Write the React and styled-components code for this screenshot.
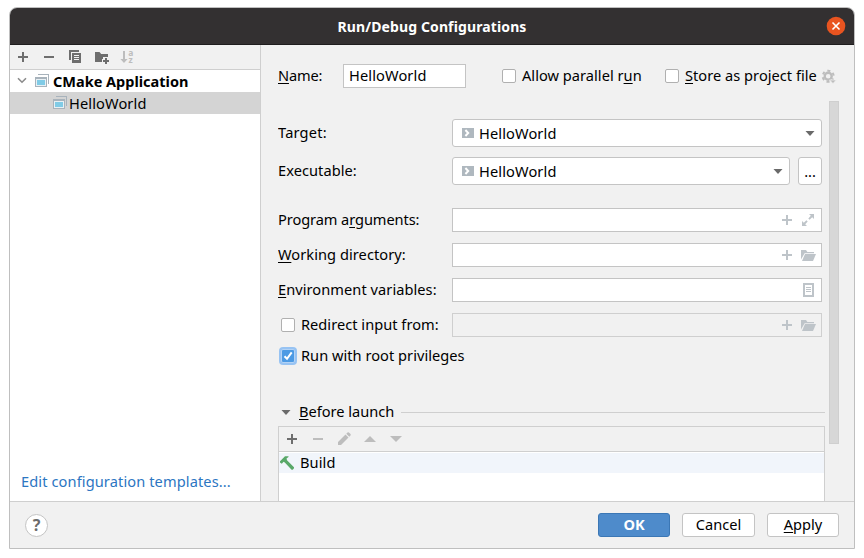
import React from "react";
import styled, { createGlobalStyle, css } from "styled-components";

const GlobalStyle = createGlobalStyle`
  * { box-sizing: border-box; }
  body { margin: 0; background: #fff; }
`;

const Window = styled.div`
  width: 846px;
  height: 542px;
  margin: 7px 0 0 9px;
  border: 1px solid #bfbfbf;
  border-radius: 8px 8px 0 0;
  background: #f1f1f1;
  overflow: hidden;
  display: flex;
  flex-direction: column;
  color: #000;
  font: 14.6px/22px "Noto Sans", sans-serif;
  white-space: nowrap;
`;

const TitleBar = styled.header`
  height: 37px;
  flex: none;
  display: grid;
  grid-template-columns: 28px 1fr 28px;
  align-items: center;
  background: #333031;
  border-bottom: 1px solid #1f1d1e;
  color: #fff;
`;

const Title = styled.h1`
  grid-column: 2;
  margin: 0;
  padding-top: 2px;
  text-align: center;
  font-size: 14px;
  line-height: 22px;
  font-weight: 700;
  letter-spacing: 0.12px;
`;

const CloseButton = styled.button`
  width: 20px;
  height: 20px;
  padding: 0;
  border: 0;
  background: none;
`;

const Body = styled.main`
  height: 457px;
  flex: none;
  display: flex;
  border-bottom: 1px solid #cfcfcf;
`;

const Sidebar = styled.aside`
  width: 251px;
  flex: none;
  display: flex;
  flex-direction: column;
  background: #fff;
  border-right: 1px solid #cfcfcf;
`;

const Toolbar = styled.div`
  height: 25px;
  flex: none;
  display: flex;
  align-items: center;
  gap: 10px;
  padding-left: 5px;
  background: #f1f1f1;
  border-bottom: 1px solid #cfcfcf;
`;

const TreeRow = styled.div`
  height: 22px;
  display: flex;
  align-items: center;
  padding-left: ${(p) => (p.$child ? 43 : 7)}px;
  background: ${(p) => (p.$selected ? "#d4d4d4" : "#fff")};
  letter-spacing: ${(p) => (p.$child ? 0.12 : 0)}px;
  ${(p) => p.$bold && css`font-weight: 700; font-size: 14.5px;`}
`;

const TreeLabel = styled.span`
  padding-left: ${(p) => p.$pad}px;
`;

const TemplatesLink = styled.a`
  margin: auto 0 9px 11px;
  color: #2c76c2;
  letter-spacing: 0.11px;
`;

const Glyph = styled.svg`
  display: block;
  flex: none;
  overflow: visible;
`;

const Editor = styled.section`
  flex: 1;
  min-width: 0;
  padding: 19px 15px 0 17px;
  display: flex;
  flex-direction: column;
`;

const NameRow = styled.div`
  height: 24px;
  flex: none;
  display: flex;
  align-items: center;
`;

const NameLabel = styled.label`
  width: 65px;
  padding-bottom: 2px;
  letter-spacing: -0.15px;
`;

const NameInput = styled.div`
  width: 123px;
  height: 24px;
  padding-left: 5px;
  border: 1px solid #c4c4c4;
  background: #fff;
  line-height: 20px;
  letter-spacing: 0.12px;
  margin-right: 36px;
`;

const CheckLabel = styled.label`
  display: flex;
  align-items: center;
  gap: 6px;
  width: ${(p) => p.$width || "auto"};
  letter-spacing: 0.03px;
`;

const CheckText = styled.span`
  padding-bottom: 2px;
`;

const Box = styled.span`
  width: 14px;
  height: 14px;
  flex: none;
  border: 1px solid #b0b0b0;
  border-radius: 2px;
  background: #fff;
  ${(p) =>
    p.$checked &&
    css`
      border-color: #b4d3f5;
      background: #4c9ae4;
      box-shadow: 0 0 0 2px #97c3f3;
    `}
`;

const Key = styled.u`
  text-decoration: underline;
  text-decoration-thickness: 1px;
  text-underline-offset: 2px;
  text-decoration-skip-ink: none;
`;

const ScrollArea = styled.div`
  flex: 1;
  min-height: 0;
  margin-top: 13px;
  display: flex;
  justify-content: space-between;
`;

const Form = styled.div`
  width: 547px;
  padding-top: 18px;
  overflow: hidden;
`;

const ScrollThumb = styled.div`
  width: 10px;
  height: 343px;
  background: #d7d7d7;
  border: 1px solid #cfcfcf;
`;

const FormRow = styled.div`
  height: ${(p) => p.$h}px;
  margin-bottom: ${(p) => p.$gap}px;
  width: 544px;
  display: grid;
  grid-template-columns: 174px 1fr;
  align-items: center;
`;

const FormLabel = styled.span`
  padding-bottom: 2px;
  letter-spacing: ${(p) => p.$track || "0.06px"};
`;

const Inset = styled.div`
  padding-left: 3px;
`;

const Inline = styled.div`
  display: flex;
  gap: 8px;
`;

const Combo = styled.div`
  flex: 1;
  height: 28px;
  display: flex;
  align-items: center;
  padding: 0 3px 0 7px;
  border: 1px solid #c4c4c4;
  border-radius: 3px;
  background: #fff;
`;

const ComboText = styled.span`
  flex: 1;
  padding: 0 0 1px 3px;
  letter-spacing: 0.12px;
`;

const MoreButton = styled.button`
  width: 24px;
  height: 28px;
  padding: 0;
  border: 1px solid #c4c4c4;
  border-radius: 3px;
  background: #fff;
  color: #000;
  font: inherit;
`;

const Field = styled.div`
  height: 24px;
  display: flex;
  align-items: center;
  justify-content: flex-end;
  gap: 6px;
  padding-right: 4px;
  border: 1px solid ${(p) => (p.$disabled ? "#cfcfcf" : "#c4c4c4")};
  background: ${(p) => (p.$disabled ? "#f1f1f1" : "#fff")};
`;

const RootRow = styled.div`
  height: 24px;
  margin: 7px 0 32px;
  padding-left: 3px;
  display: flex;
  align-items: center;
`;

const SectionHead = styled.div`
  height: 24px;
  display: flex;
  align-items: center;

  &::after {
    content: "";
    flex: 1;
    height: 1px;
    margin-left: 7px;
    background: #cfcfcf;
  }
`;

const SectionTitle = styled.span`
  width: 95px;
  margin-left: 5px;
  padding-bottom: 2px;
`;

const TaskPanel = styled.div`
  height: 90px;
  margin-top: 2px;
  background: #fff;
  border: 1px solid #cfcfcf;
`;

const TaskRow = styled.div`
  height: 20px;
  margin-top: 1px;
  display: flex;
  align-items: center;
  gap: 5px;
  background: #f1f5fb;
`;

const TaskName = styled.span`
  padding-bottom: 2px;
  letter-spacing: 0.1px;
`;

const Footer = styled.footer`
  height: 46px;
  display: flex;
  align-items: center;
  padding: 0 15px 0 15px;
  gap: 12px;
`;

const HelpButton = styled.button`
  width: 23px;
  height: 23px;
  padding: 0;
  margin-right: auto;
  border: 1px solid #c4c4c4;
  border-radius: 50%;
  background: #fff;
  color: #6b6b6b;
  font: 700 16px/21px "Noto Sans", sans-serif;
`;

const Button = styled.button`
  width: ${(p) => p.$w || 72}px;
  height: 24px;
  padding: 0 0 2px;
  border: 1px solid ${(p) => (p.$primary ? "#3b77b5" : "#c4c4c4")};
  border-radius: 3px;
  background: ${(p) => (p.$primary ? "#4e8bcb" : "#fff")};
  color: ${(p) => (p.$primary ? "#fff" : "#000")};
  font: inherit;
  line-height: 20px;
  font-weight: ${(p) => (p.$primary ? 700 : 400)};
`;

const Icon = ({ children, w = 16, h = 16, color = "#6e6e6e", crisp }) => (
  <Glyph
    width={w}
    height={h}
    viewBox={`0 0 ${w} ${h}`}
    fill={color}
    shapeRendering={crisp ? "crispEdges" : "auto"}
  >
    {children}
  </Glyph>
);

const Plus = ({ color }) => (
  <Icon color={color} crisp><path d="M7 3h2v4h4v2H9v4H7V9H3V7h4z" /></Icon>
);
const Minus = ({ color }) => (
  <Icon color={color} crisp><path d="M3 7h10v2H3z" /></Icon>
);
const Copy = () => (
  <Icon crisp>
    <path d="M2 1h10v2H4v8H2z" />
    <path d="M5 4h9v10H5z" />
    <path d="M7 6h5v1H7zM7 8h5v1H7zM7 10h5v1H7z" fill="#f1f1f1" />
  </Icon>
);
const NewFolder = () => (
  <Icon>
    <path d="M2 3h4.5l1.7 2H15v3h-5v2H9v3H2z" />
    <path d="M12 9h2v2h2v2h-2v2h-2v-2h-2v-2h2z" />
  </Icon>
);
const SortAz = () => (
  <Icon color="#bdbdbd">
    <path d="M4 2h2v8h2.6L5 14 1.4 10H4z" />
    <text x="9.2" y="7" fontSize="8.5" fontWeight="700" fontFamily="Noto Sans, sans-serif">a</text>
    <text x="9.4" y="14" fontSize="8.5" fontWeight="700" fontFamily="Noto Sans, sans-serif">z</text>
  </Icon>
);
const Chevron = () => (
  <Icon w={10} h={8}>
    <path d="M1 1.2 5 5.2 9 1.2" fill="none" stroke="#8c8c8c" strokeWidth="1.6" />
  </Icon>
);
const AppIcon = () => (
  <Icon w={14} h={14} color="#a8b3bc" crisp>
    <path d="M3 0h11v10h-1V1H3z" />
    <path d="M0 3h12v10H0z" />
    <path d="M1 5h10v7H1z" fill="#e8f0f4" />
    <path d="M2 6h8v5H2z" fill="#80cbe6" />
  </Icon>
);
const Target = () => (
  <Icon color="#afb8bf">
    <path d="M2 3h12v10H2z" />
    <path d="M5.4 5 8.2 8 5.4 11" fill="none" stroke="#fff" strokeWidth="2" />
  </Icon>
);
const Caret = ({ color = "#6a6a6a", up, wide }) => (
  <Icon color={color}>
    <path d={up ? "M2 11h12L8 5z" : wide ? "M2 5h12L8 11z" : "M3.5 6h9L8 11z"} />
  </Icon>
);
const pale = "#bec4c9";
const Expand = () => (
  <Icon color={pale}>
    <path d="M8 2h5v5l-1.8-1.8-2.6 2.5-1.3-1.3L9.8 3.8zM1 9l1.8 1.8 2.6-2.5 1.3 1.3-2.5 2.6L6 14H1z" />
  </Icon>
);
const OpenFolder = () => (
  <Icon color={pale}>
    <path d="M0 3h5l1.4 2H13v1.3H3.6L0 12.5z" />
    <path d="M4 7h11l-3 7H1z" />
  </Icon>
);
const Doc = () => (
  <Icon color={pale} crisp>
    <path d="M2 1h11v14H2zM4 3v10h7V3z" fillRule="evenodd" />
    <path d="M5 5h5v1H5zM5 7h5v1H5zM5 9h5v1H5z" />
  </Icon>
);
const Pencil = () => (
  <Icon color="#bdbdbd">
    <path d="M2 11 9.5 3.5l3 3L5 14H2zM10.3 2.7l1.2-1.2q.7-.6 1.4 0l1.6 1.6q.6.7 0 1.4l-1.2 1.2z" />
  </Icon>
);
const Hammer = () => (
  <Icon color="#59a869">
    <path d="M1 7.6 1 6.2 6 1.3 9.5 1.2 9.5 2 7.5 3.6 8 5.2 15 12.3 15 13.3 13.7 14.8 12.6 14.8 5.8 7.5 4.6 6.8 2.8 8.8z" />
  </Icon>
);
const Gear = () => (
  <Icon color="#bdbdbd">
    <g fill="none" stroke="#bdbdbd">
      <circle cx="7.2" cy="8.2" r="3.5" strokeWidth="2.4" />
      <circle cx="7.2" cy="8.2" r="5.5" strokeWidth="2" strokeDasharray="2.9 2.86" strokeDashoffset="1.45" transform="rotate(30 7.2 8.2)" />
    </g>
    <path d="M8.5 12h6.8L12 15.6z" stroke="#f1f1f1" strokeWidth=".8" />
  </Icon>
);

export default function App() {
  return (
    <>
      <GlobalStyle />
      <Window>
        <TitleBar>
          <Title>Run/Debug Configurations</Title>
          <CloseButton aria-label="Close">
            <Icon w={20} h={20}>
              <circle cx="10" cy="10" r="9.3" fill="#e95420" />
              <path d="M6.5 6.5l7 7M13.5 6.5l-7 7" stroke="#fff" strokeWidth="1.6" />
            </Icon>
          </CloseButton>
        </TitleBar>
        <Body>
          <Sidebar>
            <Toolbar>
              <Plus /><Minus /><Copy /><NewFolder /><SortAz />
            </Toolbar>
            <TreeRow $bold>
              <Chevron />
              <TreeLabel $pad={8}><AppIcon /></TreeLabel>
              <TreeLabel $pad={4}>CMake Application</TreeLabel>
            </TreeRow>
            <TreeRow $child $selected>
              <AppIcon />
              <TreeLabel $pad={2}>HelloWorld</TreeLabel>
            </TreeRow>
            <TemplatesLink>Edit configuration templates...</TemplatesLink>
          </Sidebar>
          <Editor>
            <NameRow>
              <NameLabel><Key>N</Key>ame:</NameLabel>
              <NameInput>HelloWorld</NameInput>
              <CheckLabel $width="163px">
                <Box /><CheckText>Allow parallel r<Key>u</Key>n</CheckText>
              </CheckLabel>
              <CheckLabel $width="156px">
                <Box /><CheckText><Key>S</Key>tore as project file</CheckText>
              </CheckLabel>
              <Gear />
            </NameRow>
            <ScrollArea>
              <Form>
                <FormRow $h={28} $gap={10}>
                  <FormLabel $track="0.2px">Target:</FormLabel>
                  <Combo><Target /><ComboText>HelloWorld</ComboText><Caret /></Combo>
                </FormRow>
                <FormRow $h={28} $gap={23}>
                  <FormLabel>Executable:</FormLabel>
                  <Inline>
                    <Combo><Target /><ComboText>HelloWorld</ComboText><Caret /></Combo>
                    <MoreButton>...</MoreButton>
                  </Inline>
                </FormRow>
                <FormRow $h={24} $gap={11}>
                  <FormLabel $track="-0.08px">Program a<Key>r</Key>guments:</FormLabel>
                  <Field><Plus color={pale} /><Expand /></Field>
                </FormRow>
                <FormRow $h={24} $gap={11}>
                  <FormLabel><Key>W</Key>orking directory:</FormLabel>
                  <Field><Plus color={pale} /><OpenFolder /></Field>
                </FormRow>
                <FormRow $h={24} $gap={11}>
                  <FormLabel><Key>E</Key>nvironment variables:</FormLabel>
                  <Field><Doc /></Field>
                </FormRow>
                <FormRow $h={24} $gap={0}>
                  <Inset>
                    <CheckLabel><Box /><CheckText>Redirect input from:</CheckText></CheckLabel>
                  </Inset>
                  <Field $disabled><Plus color={pale} /><OpenFolder /></Field>
                </FormRow>
                <RootRow>
                  <CheckLabel>
                    <Box $checked>
                      <Icon w={12} h={12}>
                        <path d="M2.5 6.3 5 8.8 9.7 2.4" fill="none" stroke="#fff" strokeWidth="2" />
                      </Icon>
                    </Box>
                    <CheckText>Run with root privileges</CheckText>
                  </CheckLabel>
                </RootRow>
                <SectionHead>
                  <Caret /><SectionTitle><Key>B</Key>efore launch</SectionTitle>
                </SectionHead>
                <TaskPanel>
                  <Toolbar>
                    <Plus /><Minus color="#bdbdbd" /><Pencil />
                    <Caret color="#bdbdbd" up /><Caret color="#bdbdbd" wide />
                  </Toolbar>
                  <TaskRow><Hammer /><TaskName>Build</TaskName></TaskRow>
                </TaskPanel>
              </Form>
              <ScrollThumb />
            </ScrollArea>
          </Editor>
        </Body>
        <Footer>
          <HelpButton>?</HelpButton>
          <Button $primary>OK</Button>
          <Button $w={73}>Cancel</Button>
          <Button><span><Key>A</Key>pply</span></Button>
        </Footer>
      </Window>
    </>
  );
}
